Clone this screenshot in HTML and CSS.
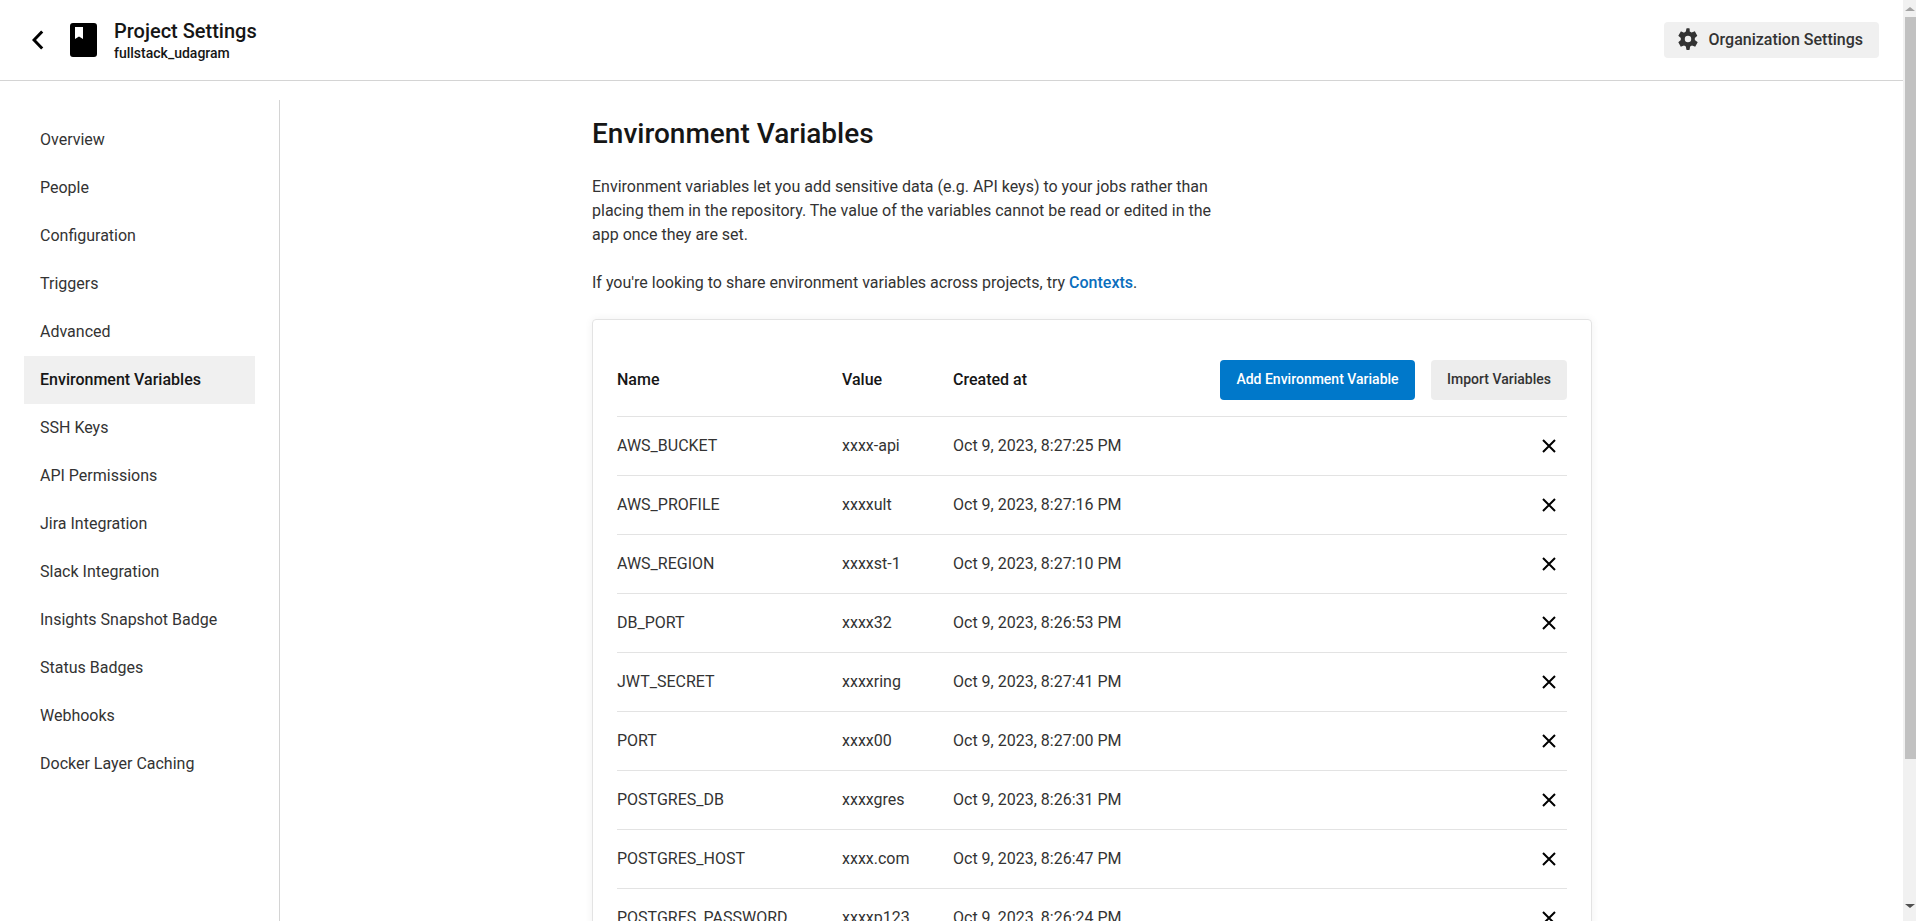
FILE: index.html
```html
<!DOCTYPE html>
<html lang="en">
    <head>
        <meta charset="UTF-8">
        <title>Project Settings</title>
        <link rel="stylesheet" href="styles.css">
    </head>
    <body>
        <div class="page">
            <header class="top_bar">
                <svg class="back_icon" width="12" height="20" viewBox="0 0 12 20"><path d="M10.2 1.5 2 10l8.2 8.5" fill="none" stroke="#000" stroke-width="3"/></svg>
                <svg class="book_icon" width="27" height="34" viewBox="0 0 27 34"><path fill-rule="evenodd" d="M3 0h21a3 3 0 0 1 3 3v28a3 3 0 0 1-3 3H3a3 3 0 0 1-3-3V3a3 3 0 0 1 3-3zM5 4v12l4-2.5 4 2.5V4z" fill="#000"/></svg>
                <div class="title_block">
                    <div class="title">Project Settings</div>
                    <div class="subtitle">fullstack_udagram</div>
                </div>
                <button class="org_button">
                    <svg width="22" height="22" viewBox="0 0 24 24"><path fill-rule="evenodd" d="M19.4 13.2c.05-.4.1-.8.1-1.2s-.05-.8-.1-1.2l2.5-2c.2-.2.3-.5.1-.7l-2.4-4.2c-.2-.3-.5-.3-.7-.2l-3 1.2c-.6-.5-1.3-.9-2-1.2L13.800 .7c-.05-.3-.3-.5-.6-.5h-2.400c-.3 0-.55.2-.6.5l-.5 3.200c-.7.3-1.400.7-2 1.200l-3-1.200c-.3-.1-.6 0-.7.2L1.600 8.100c-.2.3-.1.5.1.7l2.500 2c-.05.4-.1.800-.1 1.200s.05.800.1 1.200l-2.500 2c-.2.2-.3.500-.1.700l2.400 4.200c.2.300.5.300.7.200l3-1.200c.6.500 1.300.900 2 1.200l.5 3.200c.05.300.3.500.6.500h2.400c.3 0 .55-.2.6-.5l.5-3.200c.7-.3 1.400-.7 2-1.200l3 1.200c.3.100.6 0 .7-.2l2.400-4.200c.2-.3.1-.5-.1-.7zM12 15.500a3.500 3.500 0 1 1 0-7 3.500 3.500 0 0 1 0 7z" fill="#333"/></svg>
                    Organization Settings
                </button>
            </header>

            <div class="columns">
                <nav class="side_nav">
                    <a class="nav_item">Overview</a>
                    <a class="nav_item">People</a>
                    <a class="nav_item">Configuration</a>
                    <a class="nav_item">Triggers</a>
                    <a class="nav_item">Advanced</a>
                    <a class="nav_item active">Environment Variables</a>
                    <a class="nav_item">SSH Keys</a>
                    <a class="nav_item">API Permissions</a>
                    <a class="nav_item">Jira Integration</a>
                    <a class="nav_item">Slack Integration</a>
                    <a class="nav_item">Insights Snapshot Badge</a>
                    <a class="nav_item">Status Badges</a>
                    <a class="nav_item">Webhooks</a>
                    <a class="nav_item">Docker Layer Caching</a>
                </nav>

                <main class="content">
                    <h1 class="heading">Environment Variables</h1>
                    <p class="intro">Environment variables let you add sensitive data (e.g. API keys) to your jobs rather than placing them in the repository. The value of the variables cannot be read or edited in the app once they are set.</p>
                    <p class="intro">If you're looking to share environment variables across projects, try <a class="link">Contexts</a>.</p>

                    <section class="card">
                        <div class="row head_row">
                            <span>Name</span>
                            <span>Value</span>
                            <span>Created at</span>
                            <div class="actions">
                                <button class="btn btn_primary">Add Environment Variable</button>
                                <button class="btn btn_secondary">Import Variables</button>
                            </div>
                        </div>
                        <div class="row"><span>AWS_BUCKET</span><span>xxxx-api</span><span>Oct 9, 2023, 8:27:25 PM</span><svg class="x_icon" viewBox="0 0 14 14"><path d="M1 1l12 12M13 1 1 13"/></svg></div>
                        <div class="row"><span>AWS_PROFILE</span><span>xxxxult</span><span>Oct 9, 2023, 8:27:16 PM</span><svg class="x_icon" viewBox="0 0 14 14"><path d="M1 1l12 12M13 1 1 13"/></svg></div>
                        <div class="row"><span>AWS_REGION</span><span>xxxxst-1</span><span>Oct 9, 2023, 8:27:10 PM</span><svg class="x_icon" viewBox="0 0 14 14"><path d="M1 1l12 12M13 1 1 13"/></svg></div>
                        <div class="row"><span>DB_PORT</span><span>xxxx32</span><span>Oct 9, 2023, 8:26:53 PM</span><svg class="x_icon" viewBox="0 0 14 14"><path d="M1 1l12 12M13 1 1 13"/></svg></div>
                        <div class="row"><span>JWT_SECRET</span><span>xxxxring</span><span>Oct 9, 2023, 8:27:41 PM</span><svg class="x_icon" viewBox="0 0 14 14"><path d="M1 1l12 12M13 1 1 13"/></svg></div>
                        <div class="row"><span>PORT</span><span>xxxx00</span><span>Oct 9, 2023, 8:27:00 PM</span><svg class="x_icon" viewBox="0 0 14 14"><path d="M1 1l12 12M13 1 1 13"/></svg></div>
                        <div class="row"><span>POSTGRES_DB</span><span>xxxxgres</span><span>Oct 9, 2023, 8:26:31 PM</span><svg class="x_icon" viewBox="0 0 14 14"><path d="M1 1l12 12M13 1 1 13"/></svg></div>
                        <div class="row"><span>POSTGRES_HOST</span><span>xxxx.com</span><span>Oct 9, 2023, 8:26:47 PM</span><svg class="x_icon" viewBox="0 0 14 14"><path d="M1 1l12 12M13 1 1 13"/></svg></div>
                        <div class="row"><span>POSTGRES_PASSWORD</span><span>xxxxp123</span><span>Oct 9, 2023, 8:26:24 PM</span><svg class="x_icon" viewBox="0 0 14 14"><path d="M1 1l12 12M13 1 1 13"/></svg></div>
                    </section>
                </main>
            </div>
        </div>

        <div class="scrollbar">
            <div class="arrow_up"></div>
            <div class="thumb"></div>
            <div class="arrow_down"></div>
        </div>
    </body>
</html>
```

FILE: styles.css
```css
html, body {
    height: 921px;
    overflow: hidden;
}

body {
    display: flex;
    margin: 0px;
    background: #FFFFFF;
    color: #333333;
    font-family: "Roboto", "Liberation Sans", sans-serif;
    font-size: 16px;
}

.page {
    flex: 1;
    min-width: 0px;
    height: 921px;
    overflow: hidden;
}

/* top bar */
.top_bar {
    display: flex;
    align-items: center;
    height: 80px;
    padding: 0px 24px 0px 32px;
    border-bottom: 1px solid #D4D4D4;
}

.back_icon { margin-right: 26px; }
.book_icon { margin-right: 17px; }

.title_block { flex: 1; padding-top: 1px; }

.title {
    font-size: 20px;
    font-weight: 500;
    line-height: 24px;
    color: #161616;
}

.subtitle {
    font-size: 14px;
    font-weight: 500;
    line-height: 20px;
    color: #161616;
}

.org_button {
    display: flex;
    align-items: center;
    gap: 10px;
    height: 36px;
    padding: 0px 16px 2px 13px;
    border: none;
    border-radius: 4px;
    background: #F0F0F0;
    color: #333333;
    font-family: inherit;
    font-size: 16px;
    font-weight: 500;
}

/* sidebar + main */
.columns { display: flex; }

.side_nav {
    flex: none;
    width: 231px;
    margin: 19px 0px 0px 0px;
    padding: 16px 24px 0px 24px;
    height: 821px;
    border-right: 1px solid #D4D4D4;
}

.nav_item {
    display: flex;
    align-items: center;
    height: 46px;
    padding: 0px 0px 2px 16px;
    color: #333333;
}

.nav_item.active {
    background: #F0F0F0;
    font-weight: 500;
    color: #161616;
}

.content {
    flex: none;
    width: 1000px;
    margin-left: 312px;
}

.heading {
    margin: 35px 0px 23px 0px;
    font-size: 28px;
    font-weight: 500;
    line-height: 36px;
    color: #161616;
}

.intro {
    width: 640px;
    margin: 0px 0px 24px 0px;
    line-height: 24px;
}

.link { color: #0A6EBD; font-weight: 500; }

/* variables card */
.card {
    margin-top: 24px;
    padding: 24px 24px 0px 24px;
    border: 1px solid #E3E3E3;
    border-radius: 4px;
    box-shadow: 0px 0px 8px rgba(0, 0, 0, 0.06);
}

.row {
    display: grid;
    grid-template-columns: 225px 111px 1fr auto;
    align-items: center;
    height: 56px;
    padding-bottom: 2px;
    border-bottom: 1px solid #E3E3E3;
}

.head_row {
    height: 70px;
    font-weight: 500;
    color: #161616;
}

.actions {
    display: flex;
    gap: 16px;
    margin-top: 2px;
}

.btn {
    height: 40px;
    padding: 0px 0px 2px 0px;
    border: none;
    border-radius: 4px;
    font-family: inherit;
    font-size: 14px;
    font-weight: 500;
}

.btn_primary {
    width: 195px;
    background: #0078CA;
    color: #FFFFFF;
}

.btn_secondary {
    width: 136px;
    background: #EDEDED;
    color: #333333;
}

.x_icon {
    width: 14px;
    height: 14px;
    margin: 2px 11px 0px 0px;
    fill: none;
    stroke: #000000;
    stroke-width: 2;
}

/* drawn scrollbar */
.scrollbar {
    display: flex;
    flex-direction: column;
    align-items: flex-end;
    flex: none;
    width: 13px;
    height: 921px;
    background: #F1F1F1;
}

.arrow_up {
    width: 0px;
    height: 0px;
    margin: 7px 1px 6px 0px;
    border-left: 5px solid transparent;
    border-right: 5px solid transparent;
    border-bottom: 4px solid #A3A3A3;
}

.thumb {
    width: 11px;
    height: 742px;
    background: #C1C1C1;
}

.arrow_down {
    width: 0px;
    height: 0px;
    margin: 145px 1px 0px 0px;
    border-left: 5px solid transparent;
    border-right: 5px solid transparent;
    border-top: 4px solid #505050;
}
```
